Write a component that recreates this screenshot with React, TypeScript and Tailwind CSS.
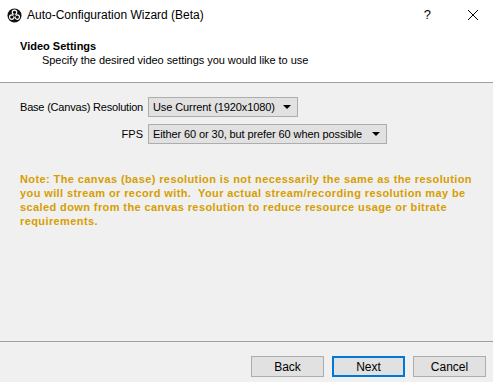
import React from "react";

const font = { fontFamily: '"Liberation Sans", Arial, sans-serif' };

function Combo({ text, width }: { text: string; width: string }) {
  return (
    <div
      className={`${width} h-[20px] border border-[#adadad] bg-[#e1e1e1] flex items-center pl-[4px] pr-[6px] text-[11px] text-black tracking-[-0.1px]`}
    >
      <span className="whitespace-nowrap">{text}</span>
      <svg width="8" height="4" viewBox="0 0 8 4" className="ml-auto shrink-0">
        <polygon points="0,0 8,0 4,4" fill="#000" />
      </svg>
    </div>
  );
}

function ObsLogo() {
  return (
    <svg width="15" height="15" viewBox="0 0 16 16">
      <circle cx="8" cy="8" r="7.5" fill="#111" />
      <circle cx="8" cy="4.6" r="2.4" fill="none" stroke="#fff" strokeWidth="1.2" />
      <circle cx="5.1" cy="9.7" r="2.4" fill="none" stroke="#fff" strokeWidth="1.2" />
      <circle cx="10.9" cy="9.7" r="2.4" fill="none" stroke="#fff" strokeWidth="1.2" />
      <circle cx="8" cy="8" r="1.3" fill="#111" />
    </svg>
  );
}

function Button({ label, primary }: { label: string; primary?: boolean }) {
  return (
    <div
      className={`w-[73px] h-[21px] flex items-center justify-center bg-[#e1e1e1] text-[12px] text-black ${
        primary ? "border-2 border-[#0078d7]" : "border border-[#adadad]"
      }`}
    >
      {label}
    </div>
  );
}

export default function App() {
  return (
    <div className="w-[493px] h-[382px] bg-[#f0f0f0] flex flex-col overflow-hidden" style={font}>
      <div className="bg-white h-[82px] border-b border-[#a0a0a0] box-content">
        <div className="h-[30px] flex items-center pl-[7px]">
          <ObsLogo />
          <span className="ml-[5px] text-[12px] text-black">Auto-Configuration Wizard (Beta)</span>
          <span className="ml-auto text-[13px] text-black mr-[36px]">?</span>
          <svg width="12" height="12" viewBox="0 0 12 12" className="mr-[14px]">
            <path d="M1 1 L11 11 M11 1 L1 11" stroke="#000" strokeWidth="1" />
          </svg>
        </div>
        <div className="pl-[20px] pt-[9px] text-[11px] leading-[14px] font-bold text-black">Video Settings</div>
        <div className="pl-[42px] text-[11px] leading-[14px] text-black tracking-[-0.05px]">
          Specify the desired video settings you would like to use
        </div>
      </div>

      <div className="flex flex-col gap-[7px] mt-[14px]">
        <div className="flex items-center">
          <div className="w-[143px] text-right text-[11px] text-black tracking-[-0.2px]">Base (Canvas) Resolution</div>
          <div className="ml-[5px]">
            <Combo text="Use Current (1920x1080)" width="w-[150px]" />
          </div>
        </div>
        <div className="flex items-center">
          <div className="w-[143px] text-right text-[11px] text-black">FPS</div>
          <div className="ml-[5px]">
            <Combo text="Either 60 or 30, but prefer 60 when possible" width="w-[239px]" />
          </div>
        </div>
      </div>

      <div className="mt-[28px] pl-[20px] pr-[4px] text-[11px] leading-[14px] font-bold text-[#d69e00] tracking-[0.4px] whitespace-nowrap">
        Note: The canvas (base) resolution is not necessarily the same as the resolution
        <br />
        you will stream or record with.&nbsp; Your actual stream/recording resolution may be
        <br />
        scaled down from the canvas resolution to reduce resource usage or bitrate
        <br />
        requirements.
      </div>

      <div className="flex-1" />

      <div className="border-t border-[#a0a0a0] pt-[14px] pb-[5px] pr-[7px] flex justify-end gap-[8px]">
        <Button label="Back" />
        <Button label="Next" primary />
        <Button label="Cancel" />
      </div>
    </div>
  );
}
